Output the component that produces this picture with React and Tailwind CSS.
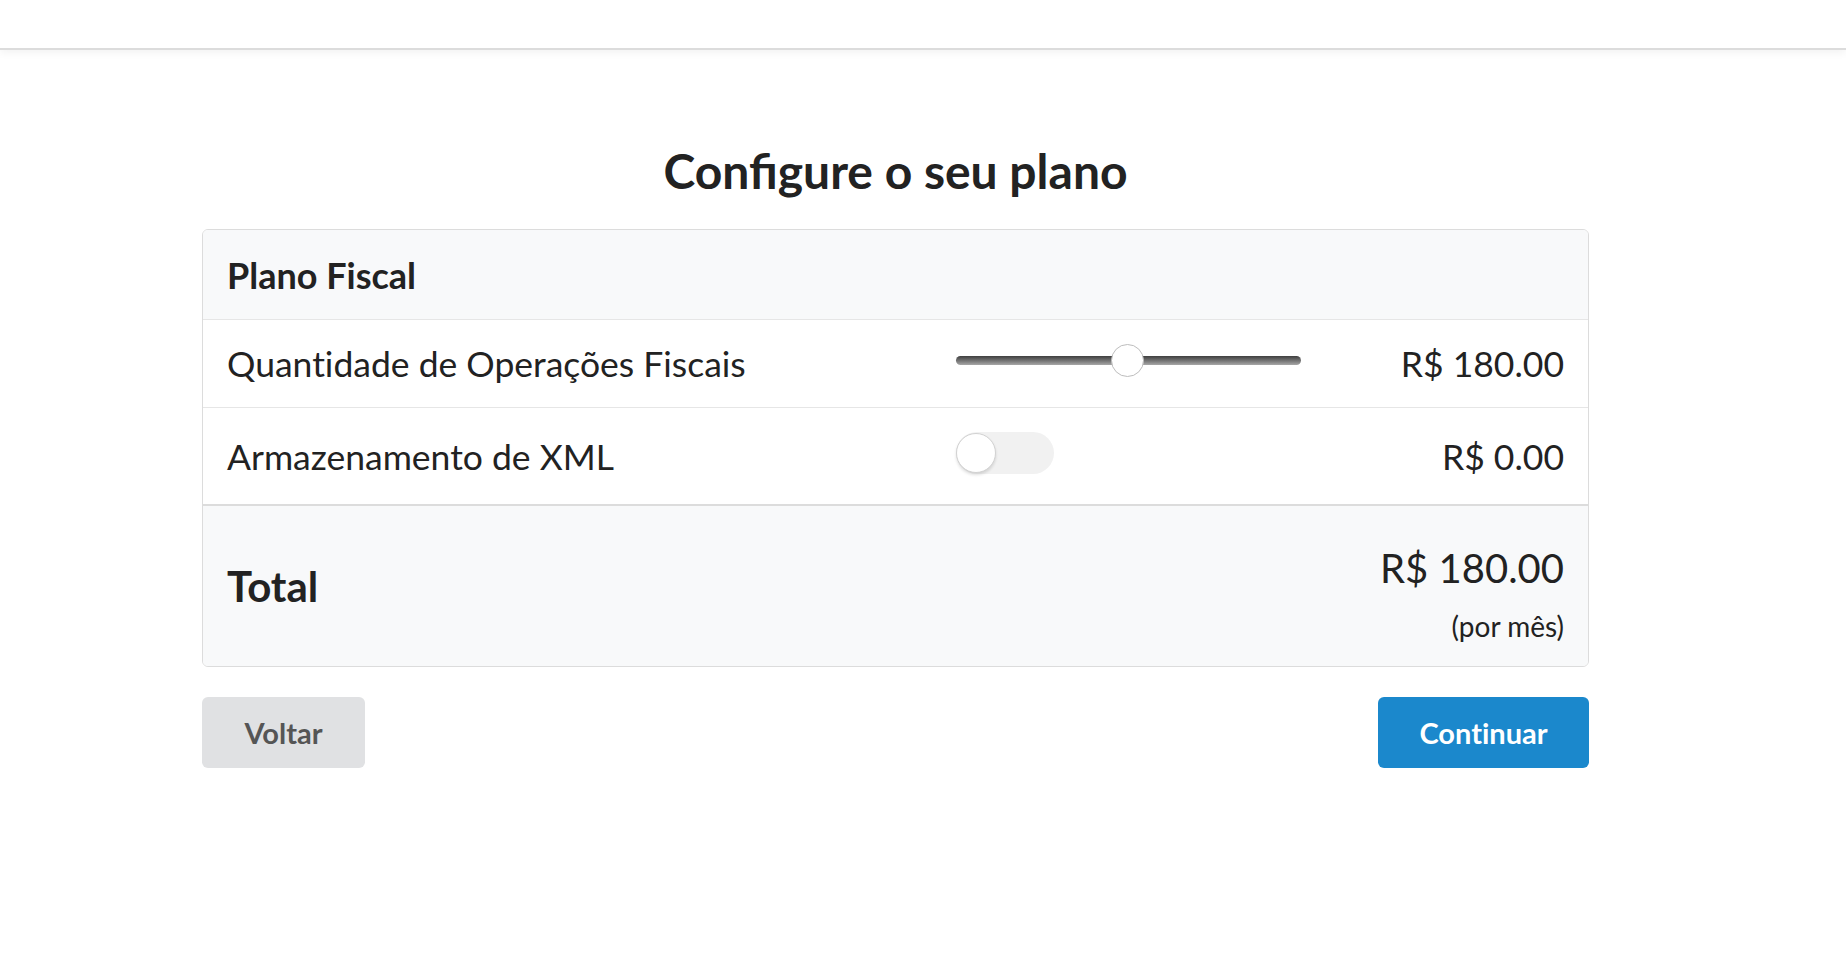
export default function App() {
  const font = { fontFamily: 'Lato, "Noto Sans", sans-serif' };
  return (
    <div className="min-h-[974px] w-full bg-white text-[#222]" style={font}>
      <div className="h-[50px] w-full border-b-2 border-[#dcdcdc] bg-white shadow-[0_3px_8px_rgba(0,0,0,0.05)]" />
      <div className="ml-[202px] w-[1387px]">
        <h1 className="mt-[92px] mb-[29px] text-center text-[48px] leading-[58px] font-bold">
          Configure o seu plano
        </h1>
        <div className="overflow-hidden rounded-[6px] border border-[#dcdcdc]">
          <div className="flex h-[90px] items-center border-b border-[#e6e6e6] bg-[#f8f9fa] px-[24px]">
            <span className="text-[36px] leading-[44px] font-bold">Plano Fiscal</span>
          </div>
          <div className="flex h-[88px] items-center border-b border-[#e6e6e6] bg-white px-[24px]">
            <span className="w-[729px] text-[35.5px] leading-[43px] [font-variant-ligatures:none]">Quantidade de Operações Fiscais</span>
            <div className="mb-[6px] flex flex-1 items-center">
              <div className="relative flex h-[34px] w-[345px] items-center">
                <div className="h-[9px] w-full rounded-full bg-gradient-to-b from-[#3f3f3f] to-[#a8a8a8]" />
                <div className="absolute top-[0px] left-[155px] h-[33px] w-[33px] rounded-full border border-[#bdbdbd] bg-white" />
              </div>
            </div>
            <span className="text-[35.5px] leading-[43px]">R$ 180.00</span>
          </div>
          <div className="flex h-[98px] items-center border-b-2 border-[#dcdcdc] bg-white px-[24px]">
            <span className="w-[729px] text-[35.5px] leading-[43px]">Armazenamento de XML</span>
            <div className="mb-[7px] flex flex-1 items-center">
              <div className="relative h-[42px] w-[98px] rounded-full bg-[#f1f1f1]">
                <div className="absolute top-[1px] left-0 h-[40px] w-[40px] rounded-full border border-[#d2d2d2] bg-white shadow-[0_2px_3px_rgba(0,0,0,0.12)]" />
              </div>
            </div>
            <span className="text-[35.5px] leading-[43px]">R$ 0.00</span>
          </div>
          <div className="flex h-[160px] items-center justify-between bg-[#f8f9fa] px-[24px]">
            <span className="text-[42px] leading-[50px] font-bold">Total</span>
            <div className="mt-[15px] flex flex-col items-end">
              <span className="text-[40px] leading-[48px]">R$ 180.00</span>
              <span className="mt-[17px] text-[28px] leading-[34px]">(por mês)</span>
            </div>
          </div>
        </div>
        <div className="mt-[30px] flex items-center justify-between">
          <button className="flex h-[71px] w-[163px] items-center justify-center rounded-[6px] bg-[#e0e1e3] text-[29px] font-bold text-[#555]">
            Voltar
          </button>
          <button className="flex h-[71px] w-[211px] items-center justify-center rounded-[6px] bg-[#1b88cc] text-[29px] font-bold text-white [font-variant-ligatures:none]">
            Continuar
          </button>
        </div>
      </div>
    </div>
  );
}
